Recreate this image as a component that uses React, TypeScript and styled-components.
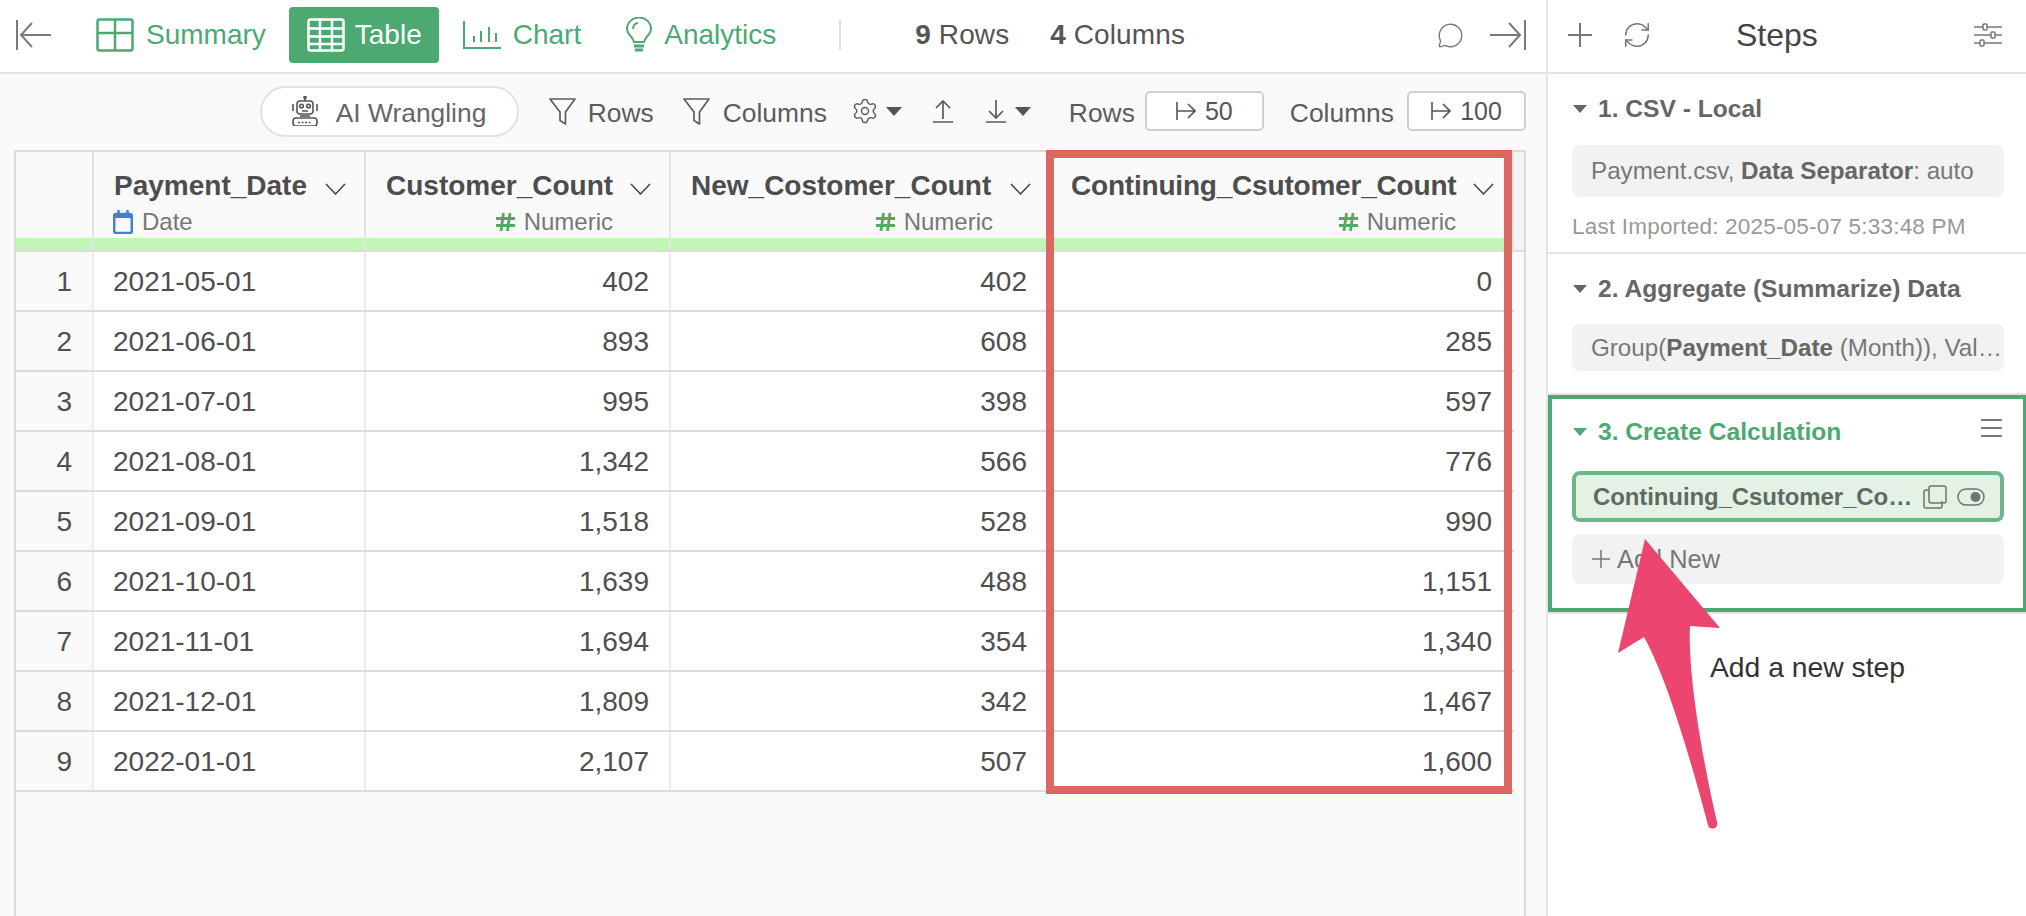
import React from 'react';
import styled, { createGlobalStyle } from 'styled-components';
import { MessageCircle, RefreshCw, Settings } from 'lucide-react';

const GlobalStyle = createGlobalStyle`
  html, body {
    margin: 0;
    padding: 0;
    background: #fff;
    font-family: "Liberation Sans", Arial, sans-serif;
    color: #4d4d4d;
  }
  * { box-sizing: border-box; }
`;

const GREEN = '#4ca972';
const LINE = '#e4e4e4';

const Page = styled.div`
  position: relative;
  display: flex;
  width: 2026px;
  height: 916px;
  overflow: hidden;
`;

/* left side */
const Main = styled.div`
  display: flex;
  flex-direction: column;
  width: 1548px;
  border-right: 2px solid ${LINE};
  background: #fafafa;
`;

const TopBar = styled.div`
  display: flex;
  align-items: center;
  height: 74px;
  padding: 0 20px 2px 16px;
  background: #fff;
  border-bottom: 2px solid ${LINE};
`;

const NavTab = styled.div<{ $active?: boolean; $ml: number }>`
  display: flex;
  align-items: center;
  gap: ${(p) => (p.$active ? 10 : 12)}px;
  height: 56px;
  margin-left: ${(p) => p.$ml}px;
  padding: 0 17px 0 18px;
  border-radius: 4px;
  font-size: 28px;
  color: ${(p) => (p.$active ? '#fff' : GREEN)};
  background: ${(p) => (p.$active ? GREEN : 'transparent')};
`;

const Divider = styled.div`
  width: 2px;
  height: 30px;
  margin-left: 46px;
  background: #dedede;
`;

const Count = styled.div<{ $ml: number }>`
  margin-left: ${(p) => p.$ml}px;
  font-size: 28px;
  letter-spacing: 0.1px;
  color: #555;
  b { font-weight: 700; }
`;

const TopRight = styled.div`
  display: flex;
  align-items: center;
  gap: 26px;
  margin-left: auto;
  color: #777;
`;

const ToolBar = styled.div`
  display: flex;
  align-items: center;
  justify-content: flex-end;
  height: 76px;
  padding: 0 20px 2px 0;
`;

const AiPill = styled.div`
  display: flex;
  align-items: center;
  gap: 17px;
  width: 259px;
  height: 51px;
  padding-left: 29px;
  border: 2px solid #e2e2e2;
  border-radius: 26px;
  background: #fff;
  color: #666;
`;

const ToolLabel = styled.span`
  padding-top: 4px;
  font-size: 26.4px;
  white-space: nowrap;
`;

const ToolItem = styled.div<{ $ml: number; $gap?: number }>`
  display: flex;
  align-items: center;
  gap: ${(p) => p.$gap ?? 12}px;
  margin-left: ${(p) => p.$ml}px;
  color: #5c5c5c;
`;

const DownCaret = styled.span`
  width: 0;
  height: 0;
  border-left: 8px solid transparent;
  border-right: 8px solid transparent;
  border-top: 9px solid #555;
`;

const LimitButton = styled.div`
  display: flex;
  align-items: center;
  justify-content: center;
  gap: 9px;
  width: 119px;
  height: 40px;
  border: 2px solid #cfcfcf;
  border-radius: 5px;
  background: #fff;
  font-size: 25px;
  color: #555;
`;

const TableArea = styled.div`
  position: relative;
  flex: 1;
  margin: 0 20px 0 14px;
  border: 2px solid #dcdcdc;
  border-bottom: none;
`;

const HeadRow = styled.div`
  display: grid;
  grid-template-columns: 78px 272px 305px 380px 463px 1fr;
  height: 100px;
  border-bottom: 2px solid #dcdcdc;
`;

const HeadCell = styled.div`
  display: flex;
  flex-direction: column;
  border-right: 2px solid #e4e4e4;
  &:last-child { border-right: none; background: #f4f4f4; }
`;

const HeadTitleRow = styled.div`
  display: flex;
  align-items: center;
  justify-content: space-between;
  height: 34px;
  margin-top: 17px;
  padding: 0 18px 0 20px;
  svg { margin-top: 5px; }
`;

const HeadTitle = styled.div<{ $tight?: boolean }>`
  font-size: 28px;
  font-weight: 700;
  letter-spacing: ${(p) => (p.$tight ? '-0.2px' : '0')};
  color: #4d4d4d;
  white-space: nowrap;
`;

const HeadSub = styled.div<{ $numeric?: boolean }>`
  display: flex;
  align-items: center;
  justify-content: ${(p) => (p.$numeric ? 'flex-end' : 'flex-start')};
  gap: 9px;
  height: 28px;
  margin-top: 5px;
  padding: ${(p) => (p.$numeric ? '0 56px 0 0' : '0 0 0 19px')};
  font-size: 24px;
  color: #777;
`;

const TypeBar = styled.div`
  height: 12px;
  margin-top: auto;
  background: #c3f5b6;
`;

const Row = styled.div`
  display: grid;
  grid-template-columns: 78px 272px 305px 380px 463px;
  width: 1498px;
  height: 60px;
  border-bottom: 2px solid #dcdcdc;
  background: #fff;
`;

const Cell = styled.div<{ $align?: 'left' | 'right'; $index?: boolean; $pr?: number }>`
  display: flex;
  align-items: center;
  justify-content: ${(p) => (p.$align === 'left' ? 'flex-start' : 'flex-end')};
  padding: ${(p) => (p.$align === 'left' ? '2px 0 0 19px' : `2px ${p.$pr ?? 20}px 0 0`)};
  border-right: 2px solid #ededed;
  background: ${(p) => (p.$index ? '#fafafa' : '#fff')};
  font-size: 28px;
  color: #4f4f4f;
  &:last-child { border-right: none; }
`;

/* red highlight drawn on top of the last column */
const Highlight = styled.div`
  position: absolute;
  left: 1030px;
  top: -2px;
  width: 466px;
  height: 644px;
  border: 8px solid #dc6760;
  pointer-events: none;
`;

/* right side */
const Side = styled.div`
  display: flex;
  flex-direction: column;
  flex: 1;
  min-width: 0;
  background: #fff;
`;

const SideHead = styled.div`
  display: flex;
  align-items: center;
  gap: 30px;
  height: 74px;
  padding: 0 24px 2px 20px;
  border-bottom: 2px solid ${LINE};
  color: #777;
`;

const SideTitle = styled.div`
  flex: 1;
  margin-left: 54px;
  font-size: 32px;
  color: #444;
`;

const Section = styled.div<{ $pb: number }>`
  padding: 17px 22px ${(p) => p.$pb}px 24px;
  border-bottom: 2px solid ${LINE};
`;

const ActiveSection = styled.div`
  padding: 15px 19px 24px 20px;
  border: 4px solid ${GREEN};
  border-right-width: 3px;
  box-shadow: 0 2px 0 ${LINE};
`;

const StepHead = styled.div<{ $active?: boolean }>`
  display: flex;
  align-items: center;
  gap: 11px;
  height: 34px;
  padding-top: 1px;
  font-size: 24.6px;
  font-weight: 700;
  color: ${(p) => (p.$active ? GREEN : '#666')};
`;

const Caret = styled.span<{ $active?: boolean }>`
  width: 0;
  height: 0;
  margin-left: 1px;
  border-left: 7px solid transparent;
  border-right: 7px solid transparent;
  border-top: 8px solid ${(p) => (p.$active ? GREEN : '#666')};
`;

const StepBox = styled.div<{ $h: number; $mt: number }>`
  height: ${(p) => p.$h}px;
  margin-top: ${(p) => p.$mt}px;
  padding: 0 0 0 19px;
  border-radius: 8px;
  background: #f2f2f2;
  font-size: 24.2px;
  line-height: ${(p) => p.$h}px;
  color: #777;
  white-space: nowrap;
  b { color: #666; }
`;

const StepNote = styled.div`
  height: 28px;
  margin-top: 16px;
  font-size: 22.5px;
  letter-spacing: 0.2px;
  line-height: 28px;
  color: #999;
  white-space: nowrap;
`;

const Hamburger = styled.div`
  display: flex;
  flex-direction: column;
  gap: 6px;
  width: 21px;
  margin: 0 2px 8px auto;
  span { height: 2px; background: #777; }
`;

const SelectedStep = styled.div`
  display: flex;
  align-items: center;
  justify-content: space-between;
  height: 51px;
  margin-top: 23px;
  padding: 0 15px 0 17px;
  border: 4px solid #6cb78a;
  border-radius: 8px;
  background: #e4f2e5;
  color: #5e6b62;
`;

const SelectedName = styled.div`
  font-size: 24px;
  letter-spacing: -0.1px;
  font-weight: 700;
  white-space: nowrap;
`;

const SelectedIcons = styled.div`
  display: flex;
  align-items: center;
  gap: 10px;
`;

const AddStep = styled.div`
  display: flex;
  align-items: center;
  gap: 7px;
  height: 50px;
  margin-top: 12px;
  padding-left: 20px;
  border-radius: 8px;
  background: #f2f2f2;
  font-size: 25.4px;
  color: #777;
`;

/* annotation on top of the page */
const Arrow = styled.svg`
  position: absolute;
  left: 1610px;
  top: 530px;
`;

const ArrowNote = styled.div`
  position: absolute;
  left: 1710px;
  top: 650px;
  font-size: 28.3px;
  line-height: 34px;
  color: #333;
`;

const rows = [
  ['2021-05-01', '402', '402', '0'],
  ['2021-06-01', '893', '608', '285'],
  ['2021-07-01', '995', '398', '597'],
  ['2021-08-01', '1,342', '566', '776'],
  ['2021-09-01', '1,518', '528', '990'],
  ['2021-10-01', '1,639', '488', '1,151'],
  ['2021-11-01', '1,694', '354', '1,340'],
  ['2021-12-01', '1,809', '342', '1,467'],
  ['2022-01-01', '2,107', '507', '1,600'],
];

const numericColumns = ['Customer_Count', 'New_Costomer_Count', 'Continuing_Csutomer_Count'];

const Chevron = () => (
  <svg width="21" height="12" viewBox="0 0 21 12" fill="none" stroke="#444" strokeWidth="1.5">
    <path d="M1 1l9.5 10L20 1" />
  </svg>
);

const CollapseLeft = () => (
  <svg width="36" height="30" viewBox="0 0 36 30" fill="none" stroke="#7a7a7a" strokeWidth="2">
    <path d="M1 0v30M35 15H5M16 3L5 15l11 12" />
  </svg>
);

const CollapseRight = () => (
  <svg width="36" height="30" viewBox="0 0 36 30" fill="none" stroke="#7a7a7a" strokeWidth="2">
    <path d="M35 0v30M0 15h30M19 3l11 12-11 12" />
  </svg>
);

const SummaryIcon = () => (
  <svg width="38" height="34" viewBox="0 0 38 34" fill="none" stroke={GREEN} strokeWidth="2.5">
    <rect x="1.5" y="1.5" width="35" height="31" rx="2" />
    <path d="M19 2v30M2 15h34" />
  </svg>
);

const TableIcon = () => (
  <svg width="38" height="34" viewBox="0 0 38 34" fill="none" stroke="#fff" strokeWidth="2.5">
    <rect x="1.5" y="1.5" width="35" height="31" rx="2" />
    <path d="M13 2v30M25 2v30M2 10.5h34M2 18.5h34M2 26h34" />
  </svg>
);

const ChartIcon = () => (
  <svg width="38" height="28" viewBox="0 0 38 28" fill="none" stroke={GREEN} strokeWidth="2">
    <path d="M1 0v27h37M11 21v-6M18 21V10M26 21V6M33 21v-9" />
  </svg>
);

const BulbIcon = () => (
  <svg width="26" height="36" viewBox="0 0 26 36" fill="none" stroke={GREEN} strokeWidth="2">
    <path d="M8 25C7 20 1 17 1 12a12 11.500 0 0 1 24 0c0 5-6 8-7 13z" />
    <path d="M7 12c0-3 2-6 5-6" />
    <path d="M8 29h10M9 33h8" strokeWidth="3" />
  </svg>
);

const RobotIcon = () => (
  <svg width="28" height="30" viewBox="0 0 28 30" fill="none" stroke="#555" strokeWidth="1.6">
    <path d="M14 1v4" />
    <circle cx="14" cy="1.500" r="1" fill="#555" />
    <rect x="6" y="5" width="16" height="13" rx="3" />
    <circle cx="10.500" cy="10" r="1.800" />
    <circle cx="17.500" cy="10" r="1.800" />
    <path d="M11 15h6M2 8v7M26 8v7" />
    <path d="M9 20h10" />
    <rect x="2" y="22" width="24" height="8" rx="3" />
    <path d="M7 26.500h14" strokeDasharray="2 1.500" />
  </svg>
);

const FunnelIcon = () => (
  <svg width="27" height="27" viewBox="0 0 27 27" fill="none" stroke="#5c5c5c" strokeWidth="1.7" strokeLinejoin="round">
    <path d="M1 1h25L16.500 14v12L11 22.500V14z" />
  </svg>
);

const UploadIcon = () => (
  <svg width="20" height="24" viewBox="0 0 20 24" fill="none" stroke="#5c5c5c" strokeWidth="1.7">
    <path d="M10 20V2M3 9l7-7 7 7M0 23h20" />
  </svg>
);

const DownloadIcon = () => (
  <svg width="20" height="24" viewBox="0 0 20 24" fill="none" stroke="#5c5c5c" strokeWidth="1.7">
    <path d="M10 1v18M3 12l7 7 7-7M0 23h20" />
  </svg>
);

const LimitArrow = () => (
  <svg width="20" height="20" viewBox="0 0 20 20" fill="none" stroke="#555" strokeWidth="1.6">
    <path d="M1 1v18M1 10h17M12 3l7 7-7 7" />
  </svg>
);

const CalendarIcon = () => (
  <svg width="20" height="24" viewBox="0 0 20 24" fill="none" stroke="#3f82d3" strokeWidth="2.500">
    <rect x="1.200" y="4" width="17.600" height="19" rx="2" />
    <path d="M1 6h18" strokeWidth="4" />
    <path d="M5.500 0v4M14.500 0v4" />
  </svg>
);

const HashIcon = () => (
  <svg width="19" height="18" viewBox="0 0 19 18" fill="none" stroke="#54a95a" strokeWidth="2.800">
    <path d="M7.500 0L5 18M14 0l-2.500 18M0 5.500h19M0 12.500h19" />
  </svg>
);

const PlusIcon = ({ size, color }: { size: number; color: string }) => (
  <svg width={size} height={size} viewBox="0 0 24 24" fill="none" stroke={color} strokeWidth="2">
    <path d="M12 0v24M0 12h24" />
  </svg>
);

const SlidersIcon = () => (
  <svg width="28" height="24" viewBox="0 0 28 24" fill="#fff" stroke="#777" strokeWidth="1.500">
    <path d="M0 4h28M0 12h28M0 20h28" />
    <rect x="9" y="1" width="4" height="6" rx="1" />
    <rect x="17" y="9" width="4" height="6" rx="1" />
    <rect x="6" y="17" width="4" height="6" rx="1" />
  </svg>
);

const CopyIcon = () => (
  <svg width="24" height="24" viewBox="0 0 24 24" fill="none" stroke="#6b756e" strokeWidth="1.500">
    <rect x="6" y="1" width="17" height="17" rx="2" />
    <path d="M6 5H3a2 2 0 0 0-2 2v14a2 2 0 0 0 2 2h14a2 2 0 0 0 2-2v-5" />
  </svg>
);

const ToggleIcon = () => (
  <svg width="28" height="18" viewBox="0 0 28 18" fill="none" stroke="#6b756e" strokeWidth="1.500">
    <rect x="1" y="1" width="26" height="16" rx="8" />
    <circle cx="18.500" cy="9" r="5" fill="#6b756e" stroke="none" />
  </svg>
);

const App: React.FC = () => (
  <>
    <GlobalStyle />
    <Page>
      <Main>
        <TopBar>
          <CollapseLeft />
          <NavTab $ml={26}><SummaryIcon />Summary</NavTab>
          <NavTab $ml={6} $active><TableIcon />Table</NavTab>
          <NavTab $ml={6}><ChartIcon />Chart</NavTab>
          <NavTab $ml={10}><BulbIcon />Analytics</NavTab>
          <Divider />
          <Count $ml={74}><b>9</b> Rows</Count>
          <Count $ml={41}><b>4</b> Columns</Count>
          <TopRight>
            <MessageCircle size={27} strokeWidth={1.2} />
            <CollapseRight />
          </TopRight>
        </TopBar>

        <ToolBar>
          <AiPill><RobotIcon /><ToolLabel>AI Wrangling</ToolLabel></AiPill>
          <ToolItem $ml={30}><FunnelIcon /><ToolLabel>Rows</ToolLabel></ToolItem>
          <ToolItem $ml={29} $gap={13}><FunnelIcon /><ToolLabel>Columns</ToolLabel></ToolItem>
          <ToolItem $ml={24} $gap={7}>
            <Settings size={28} strokeWidth={1.2} />
            <DownCaret />
          </ToolItem>
          <ToolItem $ml={31}><UploadIcon /></ToolItem>
          <ToolItem $ml={33} $gap={9}><DownloadIcon /><DownCaret /></ToolItem>
          <ToolItem $ml={38}><ToolLabel>Rows</ToolLabel></ToolItem>
          <ToolItem $ml={10}><LimitButton><LimitArrow />50</LimitButton></ToolItem>
          <ToolItem $ml={26}><ToolLabel>Columns</ToolLabel></ToolItem>
          <ToolItem $ml={13}><LimitButton><LimitArrow />100</LimitButton></ToolItem>
        </ToolBar>

        <TableArea>
          <HeadRow>
            <HeadCell><TypeBar /></HeadCell>
            <HeadCell>
              <HeadTitleRow><HeadTitle>Payment_Date</HeadTitle><Chevron /></HeadTitleRow>
              <HeadSub><CalendarIcon />Date</HeadSub>
              <TypeBar />
            </HeadCell>
            {numericColumns.map((name) => (
              <HeadCell key={name}>
                <HeadTitleRow>
                  <HeadTitle $tight={name.startsWith('Continuing')}>{name}</HeadTitle>
                  <Chevron />
                </HeadTitleRow>
                <HeadSub $numeric><HashIcon />Numeric</HeadSub>
                <TypeBar />
              </HeadCell>
            ))}
            <HeadCell />
          </HeadRow>
          {rows.map((row, i) => (
            <Row key={row[0]}>
              <Cell $index>{i + 1}</Cell>
              <Cell $align="left">{row[0]}</Cell>
              <Cell>{row[1]}</Cell>
              <Cell $pr={22}>{row[2]}</Cell>
              <Cell $pr={22}>{row[3]}</Cell>
            </Row>
          ))}
          <Highlight />
        </TableArea>
      </Main>

      <Side>
        <SideHead>
          <PlusIcon size={24} color="#777" />
          <RefreshCw size={30} strokeWidth={1.2} />
          <SideTitle>Steps</SideTitle>
          <SlidersIcon />
        </SideHead>

        <Section $pb={11}>
          <StepHead><Caret />1. CSV - Local</StepHead>
          <StepBox $h={52} $mt={20}>Payment.csv, <b>Data Separator</b>: auto</StepBox>
          <StepNote>Last Imported: 2025-05-07 5:33:48 PM</StepNote>
        </Section>

        <Section $pb={22}>
          <StepHead><Caret />2. Aggregate (Summarize) Data</StepHead>
          <StepBox $h={47} $mt={19}>Group(<b>Payment_Date</b> (Month)), Val…</StepBox>
        </Section>

        <ActiveSection>
          <StepHead $active>
            <Caret $active />3. Create Calculation
            <Hamburger><span /><span /><span /></Hamburger>
          </StepHead>
          <SelectedStep>
            <SelectedName>Continuing_Csutomer_Co…</SelectedName>
            <SelectedIcons><CopyIcon /><ToggleIcon /></SelectedIcons>
          </SelectedStep>
          <AddStep><PlusIcon size={18} color="#777" />Add New</AddStep>
        </ActiveSection>
      </Side>

      <Arrow width="120" height="300" viewBox="0 0 120 300">
        <path
          d="M35 9L110 98L80 96C78 135 88 210 107 292Q108 298 103 298.500Q99 299 98 295C82 235 58 150 34 107L8 123Z"
          fill="#ec4570"
        />
      </Arrow>
      <ArrowNote>Add a new step</ArrowNote>
    </Page>
  </>
);

export default App;
